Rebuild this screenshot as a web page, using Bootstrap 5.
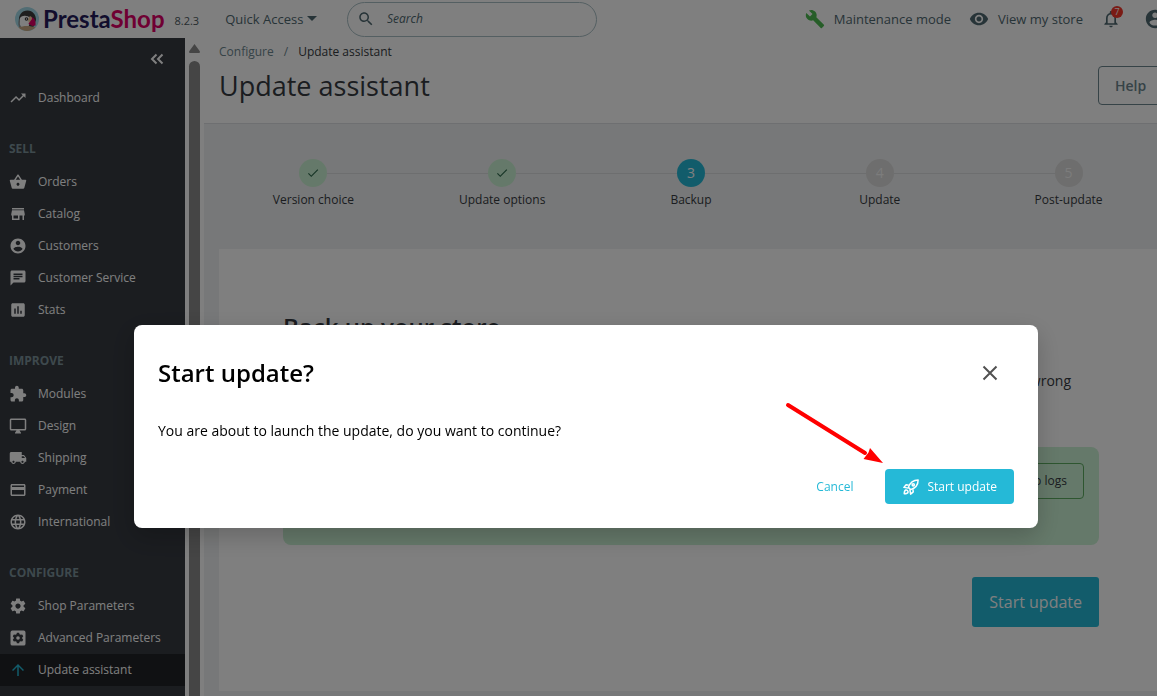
<!DOCTYPE html>
<html lang="en">
<head>
<meta charset="utf-8">
<meta name="viewport" content="width=device-width, initial-scale=1">
<title>Update assistant</title>
<link rel="stylesheet" href="https://cdn.jsdelivr.net/npm/bootstrap@5.3.0/dist/css/bootstrap.min.css">
<style>
  :root { --ps-ink: #363a41; --ps-slate: #6c868e; --ps-blue: #25b9d7; }
  html, body { height: 100%; }
  body { font-family: "Open Sans", "Noto Sans", sans-serif; font-size: 14px; line-height: 20px; color: var(--ps-ink); background: #fff; overflow: hidden; }
  a { color: inherit; text-decoration: none; }
  .ico { width: 18px; height: 18px; fill: currentColor; flex: none; display: block; }
  .ico-lg { width: 20px; height: 20px; }
  /* The admin shell runs slightly wider than the window */
  .shell { width: calc(100% + 21px); min-height: 100vh; }
  .topbar { height: 38px; padding: 0 12px 0 15px; color: #4f6870; font-size: 13px; }
  .topbar-left { width: 332px; }
  .brand-name { font-family: Lato, sans-serif; font-weight: 700; font-size: 24px; line-height: 30px; color: #251b5b; }
  .brand-name span { color: #df0067; }
  .version { margin-left: 10px; font-size: 11px; color: #4e5a60; }
  .quick { margin-left: 26px; }
  .quick::after { border-width: 5px 5px 0; }
  .search-box { width: 250px; height: 35px; border: 1px solid #a9bfc5; border-radius: 18px; padding: 0 9px; }
  .search-box input { background: none; border: 0; outline: 0; width: 180px; padding: 0; font-size: 12px; font-style: italic; color: var(--ps-ink); }
  .search-box input::placeholder { color: #4f6870; opacity: 1; }
  .wrench { color: #4cbb50; }
  .nav-gap { margin-left: 9px; }
  .nav-gap-lg { margin-left: 18px; }
  .user-link { margin-left: 23px; }
  .user-ico { width: 22px; height: 22px; }
  .bell-count { width: 12px; height: 12px; top: -3px; right: -2px; font-size: 9px; line-height: 12px; background: #f5372b; color: #fff; }
  .sidebar { width: 185px; background: var(--ps-ink); color: #fff; flex: none; }
  .collapse-row { height: 44px; padding: 0 21px 2px 0; }
  .side-link { height: 32px; padding-left: 9px; gap: 11px; font-size: 12px; }
  .side-link.current { background: #202226; }
  .side-link.current .ico { color: var(--ps-blue); }
  .side-title { margin: 25px 0 7px 9px; font-size: 12px; line-height: 20px; font-weight: 700; color: #7c939b; }
  .scroller { width: 19px; flex: none; padding: 6px 0 0 4px; background: #fff; }
  .scroller-up { width: 11px; height: 9px; fill: #8a8a8a; display: block; }
  .scroller-thumb { width: 11px; height: calc(100% - 17px); margin-top: 8px; border-radius: 6px 6px 0 0; background: #8a8a8a; }
  .page-head { height: 86px; padding: 4px 0 0 15px; border-bottom: 1px solid #dcdfe2; }
  .crumbs { font-size: 12px; --bs-breadcrumb-divider-color: #6c868e; --bs-breadcrumb-item-padding-x: 10px; }
  .crumbs li:first-child { color: var(--ps-slate); }
  .page-title { font-size: 27px; line-height: 36px; font-weight: 400; margin: 6px 0 0; }
  .help-btn { width: 80px; height: 39px; margin: 24px 0 0; padding: 0 16px; border: 1px solid var(--ps-slate); border-radius: 4px; font-weight: 600; color: var(--ps-slate); background: none; text-align: left; }
  .workspace { background: #eff1f2; padding: 35px 15px 15px; }
  .stepper { margin: 0 0 39px; }
  .step-item { position: relative; font-size: 12px; }
  .step-item + .step-item::before { content: ""; position: absolute; top: 14px; left: calc(-50% + 14px); width: calc(100% - 28px); height: 1px; background: #dadcde; }
  .step-dot { width: 28px; height: 28px; border-radius: 50%; background: #dcdcdc; color: #f8f8f8; font-size: 14px; margin-bottom: 3px; }
  .step-dot.done { background: #cbf2d4; color: #2d6a4c; }
  .step-dot.active { background: var(--ps-blue); color: #fff; }
  .step-check { width: 14px; height: 14px; }
  .panel { background: #fff; padding: 64px; }
  .panel h2 { font-size: 24px; line-height: 28px; font-weight: 600; margin: 0; }
  .panel-text { margin: 30px 28px 56px 0; }
  .result { height: 98px; padding: 16px 15px; border-radius: 8px; background: #cbf2d4; }
  .logs-btn { height: 36px; padding: 0 16px; font-size: 12px; border: 1px solid #5cac60; border-radius: 4px; background: none; color: var(--ps-ink); }
  .cta { height: 50px; margin-top: 32px; padding: 0 17px; border: 0; border-radius: 3px; background: var(--ps-blue); color: #fff; font-size: 16px; }
  .modal { padding-left: 15px; color: #000; }
  .modal-dialog { max-width: 904px; margin: 325px auto 0; }
  .modal-content { border: 0; border-radius: 8px; padding: 24px; box-shadow: 0 8px 24px rgba(0,0,0,.2); }
  .modal-head { height: 48px; padding-right: 16px; }
  .modal-title { font-size: 24px; line-height: 32px; font-weight: 600; }
  .close-btn { padding: 0; border: 0; background: none; color: #515151; }
  .modal-copy { margin: 24px 0 28px; }
  .cancel-btn { height: 35px; padding: 0 16px; border: 0; background: none; color: var(--ps-blue); font-size: 12px; }
  .go-btn { height: 35px; gap: 7px; padding: 0 17px; border: 0; border-radius: 4px; background: var(--ps-blue); color: #fff; font-size: 12px; font-weight: 500; }
  .pointer { position: absolute; right: 100%; bottom: 100%; width: 104px; height: 72px; overflow: visible; pointer-events: none; }
</style>
</head>
<body>
<svg class="d-none" aria-hidden="true">
  <symbol id="trend" viewBox="0 0 24 24"><path d="M16 6l2.290 2.290-4.880 4.880-4-4L2 16.590 3.410 18l6-6 4 4 6.300-6.290L22 12V6z"/></symbol>
  <symbol id="basket" viewBox="0 0 24 24"><path d="M17.210 9l-4.380-6.560c-.19-.28-.51-.42-.83-.42-.32 0-.64.14-.83.43L6.790 9H2c-.55 0-1 .45-1 1 0 .09.01.18.04.27l2.540 9.270c.23.84 1 1.460 1.920 1.460h13c.92 0 1.690-.62 1.930-1.460l2.540-9.270L23 10c0-.55-.45-1-1-1h-4.790zM9 9l3-4.400L15 9H9zm3 8c-1.100 0-2-.9-2-2s.9-2 2-2 2 .9 2 2-.9 2-2 2z"/></symbol>
  <symbol id="store" viewBox="0 0 24 24"><path d="M20 4H4v2h16V4zm1 10v-2l-1-5H4l-1 5v2h1v6h10v-6h4v6h2v-6h1zm-9 4H6v-4h6v4z"/></symbol>
  <symbol id="person" viewBox="0 0 24 24"><path d="M12 2C6.480 2 2 6.480 2 12s4.480 10 10 10 10-4.480 10-10S17.520 2 12 2zm0 3c1.660 0 3 1.340 3 3s-1.340 3-3 3-3-1.340-3-3 1.340-3 3-3zm0 14.200c-2.500 0-4.710-1.280-6-3.220.030-1.990 4-3.080 6-3.080 1.990 0 5.970 1.090 6 3.080-1.290 1.940-3.500 3.220-6 3.220z"/></symbol>
  <symbol id="chat" viewBox="0 0 24 24"><path d="M20 2H4c-1.100 0-1.990.9-1.990 2L2 22l4-4h14c1.100 0 2-.9 2-2V4c0-1.100-.9-2-2-2zM6 9h12v2H6V9zm8 5H6v-2h8v2zm4-6H6V6h12v2z"/></symbol>
  <symbol id="stats" viewBox="0 0 24 24"><path d="M19 3H5c-1.100 0-2 .9-2 2v14c0 1.100.9 2 2 2h14c1.100 0 2-.9 2-2V5c0-1.100-.9-2-2-2zM9 17H7v-7h2v7zm4 0h-2V7h2v10zm4 0h-2v-4h2v4z"/></symbol>
  <symbol id="puzzle" viewBox="0 0 24 24"><path d="M20.500 11H19V7c0-1.100-.9-2-2-2h-4V3.500C13 2.120 11.880 1 10.500 1S8 2.120 8 3.500V5H4c-1.100 0-1.990.9-1.990 2v3.800H3.500c1.490 0 2.700 1.210 2.700 2.700s-1.210 2.700-2.700 2.700H2V20c0 1.100.9 2 2 2h3.800v-1.500c0-1.490 1.210-2.700 2.700-2.700 1.490 0 2.700 1.210 2.700 2.700V22H17c1.100 0 2-.9 2-2v-4h1.500c1.380 0 2.500-1.120 2.500-2.500S21.880 11 20.500 11z"/></symbol>
  <symbol id="screen" viewBox="0 0 24 24"><path d="M21 2H3c-1.100 0-2 .9-2 2v12c0 1.100.9 2 2 2h7l-2 3v1h8v-1l-2-3h7c1.100 0 2-.9 2-2V4c0-1.100-.9-2-2-2zm0 14H3V4h18v12z"/></symbol>
  <symbol id="truck" viewBox="0 0 24 24"><path d="M20 8h-3V4H3c-1.100 0-2 .9-2 2v11h2c0 1.660 1.340 3 3 3s3-1.340 3-3h6c0 1.660 1.340 3 3 3s3-1.340 3-3h2v-5l-3-4zM6 18.500c-.83 0-1.500-.67-1.500-1.500s.67-1.500 1.500-1.500 1.500.67 1.500 1.500-.67 1.500-1.500 1.500zm13.500-9l1.960 2.500H17V9.500h2.500zm-1.500 9c-.83 0-1.500-.67-1.500-1.500s.67-1.500 1.500-1.500 1.500.67 1.500 1.500-.67 1.500-1.500 1.500z"/></symbol>
  <symbol id="payment" viewBox="0 0 24 24"><path d="M20 4H4c-1.110 0-1.990.89-1.990 2L2 18c0 1.110.89 2 2 2h16c1.110 0 2-.89 2-2V6c0-1.110-.89-2-2-2zm0 14H4v-6h16v6zm0-10H4V6h16v2z"/></symbol>
  <symbol id="globe" viewBox="0 0 24 24"><path d="M11.990 2C6.470 2 2 6.480 2 12s4.470 10 9.990 10C17.520 22 22 17.520 22 12S17.520 2 11.990 2zm6.930 6h-2.950c-.32-1.250-.78-2.450-1.380-3.560 1.840.63 3.370 1.910 4.330 3.560zM12 4.040c.83 1.200 1.480 2.530 1.910 3.960h-3.820c.43-1.430 1.080-2.760 1.910-3.960zM4.260 14C4.100 13.360 4 12.690 4 12s.1-1.360.26-2h3.380c-.08.66-.14 1.320-.14 2 0 .68.06 1.340.14 2H4.260zm.82 2h2.950c.32 1.250.78 2.450 1.380 3.560-1.840-.63-3.370-1.900-4.330-3.560zm2.950-8H5.080c.96-1.660 2.490-2.930 4.330-3.560C8.810 5.550 8.350 6.750 8.030 8zM12 19.960c-.83-1.200-1.480-2.530-1.910-3.960h3.820c-.43 1.430-1.080 2.760-1.910 3.960zM14.340 14H9.660c-.09-.66-.16-1.320-.16-2 0-.68.07-1.350.16-2h4.680c.09.65.16 1.320.16 2 0 .68-.07 1.340-.16 2zm.25 5.560c.6-1.110 1.060-2.310 1.380-3.560h2.950c-.96 1.650-2.490 2.930-4.330 3.560zM16.360 14c.08-.66.14-1.320.14-2 0-.68-.06-1.340-.14-2h3.380c.16.64.26 1.310.26 2s-.1 1.360-.26 2h-3.380z"/></symbol>
  <symbol id="gear" viewBox="0 0 24 24"><path d="M19.430 12.980c.04-.32.07-.64.07-.98s-.03-.66-.07-.98l2.110-1.650c.19-.15.24-.42.12-.64l-2-3.460c-.12-.22-.39-.3-.61-.22l-2.490 1c-.52-.4-1.080-.73-1.690-.98l-.38-2.650C14.460 2.180 14.250 2 14 2h-4c-.25 0-.46.18-.49.42l-.38 2.650c-.61.25-1.170.59-1.690.98l-2.490-1c-.23-.09-.49 0-.61.22l-2 3.460c-.13.22-.07.49.12.64l2.110 1.650c-.04.32-.07.65-.07.98s.03.66.07.98l-2.110 1.650c-.19.15-.24.42-.12.64l2 3.460c.12.22.39.3.61.22l2.490-1c.52.4 1.080.73 1.690.98l.38 2.650c.03.24.24.42.49.42h4c.25 0 .46-.18.49-.42l.38-2.650c.61-.25 1.170-.59 1.690-.98l2.490 1c.23.09.49 0 .61-.22l2-3.460c.12-.22.07-.49-.12-.64l-2.110-1.650zM12 15.500c-1.930 0-3.500-1.570-3.500-3.500s1.570-3.500 3.500-3.500 3.500 1.570 3.500 3.500-1.570 3.500-3.500 3.500z"/></symbol>
  <symbol id="gearbox" viewBox="0 0 24 24"><rect x="2" y="2" width="20" height="20" rx="2.500"/><path fill="#363a41" d="M10.500 5h3l.5 2 1.500.8 2-.6 1.500 2.600-1.400 1.400v1.600l1.400 1.400-1.500 2.600-2-.6-1.500.8-.5 2h-3l-.5-2-1.500-.8-2 .6L5 14.200l1.400-1.400v-1.600L5 9.800l1.500-2.600 2 .6L10 7z"/><circle cx="12" cy="12" r="2.400"/></symbol>
  <symbol id="up" viewBox="0 0 24 24"><path d="M4 12l1.410 1.410L11 7.830V20h2V7.830l5.580 5.590L20 12l-8-8-8 8z"/></symbol>
  <symbol id="search" viewBox="0 0 24 24"><path d="M15.500 14h-.79l-.28-.27C15.410 12.590 16 11.110 16 9.500 16 5.910 13.090 3 9.500 3S3 5.910 3 9.500 5.910 16 9.500 16c1.610 0 3.090-.59 4.230-1.570l.27.28v.79l5 4.990L20.490 19l-4.990-5zm-6 0C7.010 14 5 11.990 5 9.500S7.010 5 9.500 5 14 7.010 14 9.500 11.990 14 9.500 14z"/></symbol>
  <symbol id="wrench" viewBox="0 0 24 24"><path d="M22.700 19l-9.100-9.100c.9-2.300.4-5-1.500-6.900-2-2-5-2.400-7.400-1.300L9 6 6 9 1.600 4.700C.4 7.100.9 10.100 2.900 12.100c1.900 1.900 4.600 2.400 6.900 1.500l9.100 9.100c.4.4 1 .4 1.400 0l2.300-2.300c.5-.4.5-1.100.1-1.400z"/></symbol>
  <symbol id="eye" viewBox="0 0 24 24"><path d="M12 4.500C7 4.500 2.730 7.610 1 12c1.730 4.390 6 7.500 11 7.500s9.270-3.110 11-7.500c-1.730-4.390-6-7.500-11-7.500zM12 17c-2.760 0-5-2.240-5-5s2.240-5 5-5 5 2.240 5 5-2.240 5-5 5zm0-8c-1.660 0-3 1.340-3 3s1.340 3 3 3 3-1.340 3-3-1.340-3-3-3z"/></symbol>
  <symbol id="bell" viewBox="0 0 24 24"><path d="M12 22c1.100 0 2-.9 2-2h-4c0 1.100.9 2 2 2zm6-6v-5c0-3.070-1.630-5.640-4.500-6.320V4c0-.83-.67-1.500-1.500-1.500s-1.500.67-1.500 1.500v.68C7.640 5.360 6 7.920 6 11v5l-2 2v1h16v-1l-2-2zm-2 1H8v-6c0-2.480 1.510-4.500 4-4.500s4 2.020 4 4.500v6z"/></symbol>
  <symbol id="check" viewBox="0 0 24 24"><path d="M9 16.170L4.830 12l-1.420 1.410L9 19 21 7l-1.410-1.410z"/></symbol>
</svg>

<div class="shell d-flex flex-column">
  <header class="topbar d-flex align-items-center">
    <div class="topbar-left d-flex align-items-center">
      <a href="#" class="d-flex align-items-center" aria-label="PrestaShop">
        <svg width="24" height="24" viewBox="0 0 24 24" class="me-1">
          <circle cx="12" cy="12" r="12" fill="#a4dbe8"/>
          <path d="M4 15C3 8 7 3.500 12.500 3.500S21 8 21 13l-3 8H7z" fill="#3c3c3c"/>
          <path d="M5 11c1.500-2 4-2.500 6-2 3 0 4.500 2 4.500 5L13 21H6c-1.500-3-2-7-1-10z" fill="#fff"/>
          <path d="M5 11c-1 3-.5 6 1 9l-2 0c-1.500-4-.5-7 1-9z" fill="#8a9499"/>
          <path d="M3.500 20.500C8 18.500 16 18.500 20.500 20.500 15.500 25 8.500 25 3.500 20.500z" fill="#c8a984"/>
          <path d="M16 10c3 0 5 4 4.500 8.500L17.500 19 13.500 17z" fill="#df0067"/>
          <path d="M14.500 9.500c1.500-.5 2.500.5 2.500 2.500l-3 4-1-3z" fill="#f6cfa0"/>
          <circle cx="11.500" cy="12" r="1.800" fill="#333"/><circle cx="11.500" cy="12" r=".7" fill="#fff"/>
        </svg>
        <span class="brand-name">Presta<span>Shop</span></span>
      </a>
      <span class="version pt-1">8.2.3</span>
      <a href="#" class="quick dropdown-toggle">Quick Access</a>
    </div>
    <label class="search-box d-flex align-items-center">
      <svg class="ico me-2"><use href="#search"/></svg>
      <input type="text" placeholder="Search" aria-label="Search" class="ms-1">
    </label>
    <nav class="d-flex align-items-center ms-auto">
      <svg class="ico ico-lg wrench"><use href="#wrench"/></svg>
      <a href="#" class="nav-gap">Maintenance mode</a>
      <svg class="ico ico-lg nav-gap-lg"><use href="#eye"/></svg>
      <a href="#" class="nav-gap">View my store</a>
      <a href="#" class="position-relative nav-gap-lg" aria-label="Notifications">
        <svg class="ico ico-lg"><use href="#bell"/></svg>
        <span class="bell-count position-absolute rounded-circle text-center">7</span>
      </a>
      <a href="#" class="user-link" aria-label="Account"><svg class="ico user-ico"><use href="#person"/></svg></a>
    </nav>
  </header>

  <div class="d-flex flex-grow-1">
    <nav class="sidebar d-flex flex-column">
      <div class="collapse-row d-flex align-items-center justify-content-end">
        <a href="#" aria-label="Collapse menu"><svg class="d-block" width="14" height="12" viewBox="0 0 14 12" fill="none" stroke="#fff" stroke-width="2"><path d="M6.500 1.500L2 6l4.500 4.500M12.500 1.500L8 6l4.500 4.500"/></svg></a>
      </div>
      <a href="#" class="side-link d-flex align-items-center"><svg class="ico"><use href="#trend"/></svg>Dashboard</a>
      <div class="side-title">SELL</div>
      <a href="#" class="side-link d-flex align-items-center"><svg class="ico"><use href="#basket"/></svg>Orders</a>
      <a href="#" class="side-link d-flex align-items-center"><svg class="ico"><use href="#store"/></svg>Catalog</a>
      <a href="#" class="side-link d-flex align-items-center"><svg class="ico"><use href="#person"/></svg>Customers</a>
      <a href="#" class="side-link d-flex align-items-center"><svg class="ico"><use href="#chat"/></svg>Customer Service</a>
      <a href="#" class="side-link d-flex align-items-center"><svg class="ico"><use href="#stats"/></svg>Stats</a>
      <div class="side-title">IMPROVE</div>
      <a href="#" class="side-link d-flex align-items-center"><svg class="ico"><use href="#puzzle"/></svg>Modules</a>
      <a href="#" class="side-link d-flex align-items-center"><svg class="ico"><use href="#screen"/></svg>Design</a>
      <a href="#" class="side-link d-flex align-items-center"><svg class="ico"><use href="#truck"/></svg>Shipping</a>
      <a href="#" class="side-link d-flex align-items-center"><svg class="ico"><use href="#payment"/></svg>Payment</a>
      <a href="#" class="side-link d-flex align-items-center"><svg class="ico"><use href="#globe"/></svg>International</a>
      <div class="side-title">CONFIGURE</div>
      <a href="#" class="side-link d-flex align-items-center"><svg class="ico"><use href="#gear"/></svg>Shop Parameters</a>
      <a href="#" class="side-link d-flex align-items-center"><svg class="ico"><use href="#gearbox"/></svg>Advanced Parameters</a>
      <a href="#" class="side-link current d-flex align-items-center"><svg class="ico"><use href="#up"/></svg>Update assistant</a>
    </nav>
    <div class="scroller" aria-hidden="true">
      <svg class="scroller-up" viewBox="0 0 11 9"><path d="M5.500 0L11 7.500Q11 9 10 9H1Q0 9 0 7.500z"/></svg>
      <div class="scroller-thumb"></div>
    </div>

    <main class="flex-grow-1 d-flex flex-column">
      <div class="page-head d-flex justify-content-between">
        <div>
          <ol class="breadcrumb crumbs mb-0">
            <li class="breadcrumb-item"><a href="#">Configure</a></li>
            <li class="breadcrumb-item"><a href="#">Update assistant</a></li>
          </ol>
          <h1 class="page-title">Update assistant</h1>
        </div>
        <button type="button" class="help-btn">Help</button>
      </div>
      <div class="workspace flex-grow-1">
        <div class="stepper d-flex text-center">
          <div class="step-item col d-flex flex-column align-items-center"><span class="step-dot done d-flex align-items-center justify-content-center"><svg class="ico step-check"><use href="#check"/></svg></span>Version choice</div>
          <div class="step-item col d-flex flex-column align-items-center"><span class="step-dot done d-flex align-items-center justify-content-center"><svg class="ico step-check"><use href="#check"/></svg></span>Update options</div>
          <div class="step-item col d-flex flex-column align-items-center"><span class="step-dot active d-flex align-items-center justify-content-center">3</span>Backup</div>
          <div class="step-item col d-flex flex-column align-items-center"><span class="step-dot d-flex align-items-center justify-content-center">4</span>Update</div>
          <div class="step-item col d-flex flex-column align-items-center"><span class="step-dot d-flex align-items-center justify-content-center">5</span>Post-update</div>
        </div>
        <section class="panel">
          <h2>Back up your store</h2>
          <p class="panel-text text-end">wrong</p>
          <div class="result d-flex justify-content-end align-items-start">
            <button type="button" class="logs-btn">Backup logs</button>
          </div>
          <div class="d-flex justify-content-end"><button type="button" class="cta">Start update</button></div>
        </section>
      </div>
    </main>
  </div>
</div>

<div class="modal-backdrop show"></div>
<div class="modal d-block" tabindex="-1" role="dialog" aria-labelledby="dialogTitle">
  <div class="modal-dialog">
    <div class="modal-content">
      <div class="modal-head d-flex align-items-center justify-content-between">
        <h2 class="modal-title" id="dialogTitle">Start update?</h2>
        <button type="button" class="close-btn" aria-label="Close"><svg class="d-block" width="16" height="16" viewBox="0 0 16 16" fill="none" stroke="currentColor" stroke-width="2"><path d="M1.500 1.500l13 13M14.500 1.500l-13 13"/></svg></button>
      </div>
      <p class="modal-copy">You are about to launch the update, do you want to continue?</p>
      <div class="d-flex justify-content-end gap-3">
        <button type="button" class="cancel-btn">Cancel</button>
        <div class="position-relative">
          <button type="button" class="go-btn d-flex align-items-center">
            <svg width="18" height="18" viewBox="0 0 24 24" fill="none" stroke="#fff" stroke-width="2" stroke-linejoin="round">
              <path d="M8.500 12.500C10.500 6.500 15 2.500 21.500 2.500c0 6.500-4 11-10 13z"/><path d="M9 9.500L5.500 9 2.500 12.500l6 1M14.500 15l.5 3.500-3.500 3-1-6"/><path d="M3 21c0-3 .5-4.500 2-5s3.500 1.500 3 3-2 2-5 2z"/><circle cx="15" cy="9" r="1.500"/>
            </svg>
            Start update
          </button>
          <svg class="pointer" viewBox="0 0 104 72" aria-hidden="true"><path d="M7 8L84 56" stroke="#f00" stroke-width="4" stroke-linecap="round"/><path d="M102 66L89 51 87.500 55.500 82.500 62z" fill="#f00"/></svg>
        </div>
      </div>
    </div>
  </div>
</div>
<script src="https://cdn.jsdelivr.net/npm/bootstrap@5.3.0/dist/js/bootstrap.bundle.min.js"></script>
</body>
</html>
